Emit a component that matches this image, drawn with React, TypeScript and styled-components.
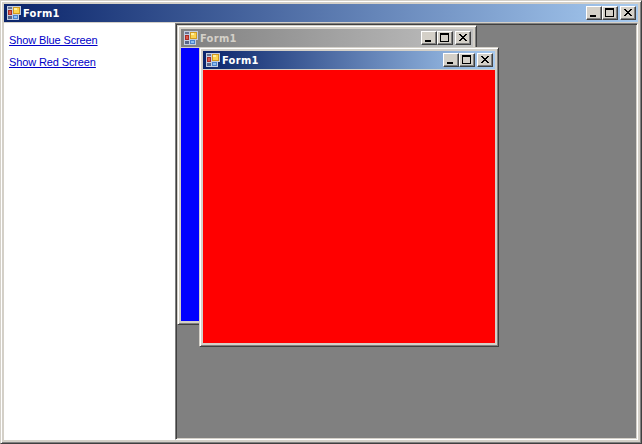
import React from "react";
import styled, { createGlobalStyle } from "styled-components";

const face = "#d4d0c8";

const GlobalStyle = createGlobalStyle`
  *, *::before, *::after { box-sizing: border-box; }
  body { margin: 0; overflow: hidden; background: ${face}; }
`;

const Frame = styled.section`
  display: flex;
  flex-direction: column;
  padding: 3px;
  background: ${face};
  border: 1px solid;
  border-color: ${face} #404040 #404040 ${face};
  box-shadow: inset 1px 1px #fff, inset -1px -1px #808080;
`;

const MainFrame = styled(Frame)`
  width: 642px;
  height: 444px;
`;

const ChildFrame = styled(Frame)<{ $offset: number }>`
  position: absolute;
  left: ${(p) => p.$offset}px;
  top: ${(p) => p.$offset}px;
  width: 300px;
  height: 300px;
`;

const TitleBar = styled.header<{ $active: boolean }>`
  display: flex;
  align-items: center;
  flex: none;
  height: 18px;
  margin-bottom: 1px;
  padding: 0 2px;
  background: ${(p) =>
    p.$active
      ? "linear-gradient(90deg, #0a246a, #a6caf0)"
      : "linear-gradient(90deg, #808080, #c0c0c0)"};
`;

const Title = styled.h1<{ $active: boolean }>`
  flex: 1;
  margin: 0 0 0 1px;
  padding-top: 2px;
  font: bold 11px/16px "DejaVu Sans Condensed", "DejaVu Sans", sans-serif;
  letter-spacing: 0.3px;
  color: ${(p) => (p.$active ? "#fff" : "#d4d0c8")};
`;

const CaptionButton = styled.button<{ $gap?: boolean }>`
  display: block;
  flex: none;
  width: 16px;
  height: 14px;
  margin: 0 0 0 ${(p) => (p.$gap ? 2 : 0)}px;
  padding: 0;
  background: ${face};
  border: 1px solid;
  border-color: #fff #404040 #404040 #fff;
  box-shadow: inset -1px -1px #808080;
`;

const Icon = styled.svg`
  flex: none;
  display: block;
`;

const Workspace = styled.main`
  display: flex;
  flex: 1;
  min-height: 0;
`;

const LinkPanel = styled.nav`
  display: flex;
  flex-direction: column;
  align-items: flex-start;
  gap: 9px;
  width: 171px;
  padding: 11px 0 0 5px;
  background: #fff;
`;

const PanelLink = styled.a`
  font: 11px/13px "Liberation Sans", Arial, sans-serif;
  letter-spacing: -0.12px;
  white-space: nowrap;
  color: #0000c8;
  text-decoration: underline;
  text-decoration-thickness: 1px;
  text-underline-offset: 1px;
`;

const MdiArea = styled.div`
  position: relative;
  flex: 1;
  background: #808080;
  border: 1px solid;
  border-color: #808080 #fff #fff #808080;
  box-shadow: inset 1px 1px #404040, inset -1px -1px ${face};
`;

const Screen = styled.div<{ $color: string }>`
  flex: 1;
  background: ${(p) => p.$color};
`;

const FormIcon = () => (
  <Icon width="16" height="16" viewBox="0 0 16 16" shapeRendering="crispEdges">
    <path fill="#c3cde0" d="M1 1h14v9h-2v5H1z" />
    <path fill="#6b7391" d="M2 2h4v2H2z" />
    <path fill="#59658a" d="M2 11h4v3H2z" />
    <path fill="#a82c28" d="M2 5h4v5H2z" />
    <path fill="#e05a48" d="M3 6h2v3H3z" />
    <path fill="#d09a20" d="M7 2h7v7H7z" />
    <path fill="#fbd450" d="M8 3h5v5H8z" />
    <path fill="#fff0a0" d="M8 3h3v2H8z" />
    <path fill="#4a82cc" d="M7 10h5v4H7z" />
    <path fill="#8cbef1" d="M8 11h3v2H8z" />
  </Icon>
);

const Caption = ({ active = true }: { active?: boolean }) => (
  <TitleBar $active={active}>
    <FormIcon />
    <Title $active={active}>Form1</Title>
    <CaptionButton aria-label="Minimize">
      <Icon width="14" height="12" shapeRendering="crispEdges">
        <path d="M3 8h6v2H3z" />
      </Icon>
    </CaptionButton>
    <CaptionButton aria-label="Maximize">
      <Icon width="14" height="12" shapeRendering="crispEdges">
        <path fillRule="evenodd" d="M2 1h9v9H2zM3 3v6h7V3z" />
      </Icon>
    </CaptionButton>
    <CaptionButton aria-label="Close" $gap>
      <Icon width="14" height="12" shapeRendering="crispEdges">
        <path d="M3 2h2v1h1v1h2V3h1V2h2v1h-1v1H9v1H8v1h1v1h1v1h1v1H9V8H8V7H6v1H5v1H3V8h1V7h1V6h1V5H5V4H4V3H3z" />
      </Icon>
    </CaptionButton>
  </TitleBar>
);

export default function App() {
  return (
    <>
      <GlobalStyle />
      <MainFrame>
        <Caption />
        <Workspace>
          <LinkPanel>
            <PanelLink href="#blue">Show Blue Screen</PanelLink>
            <PanelLink href="#red">Show Red Screen</PanelLink>
          </LinkPanel>
          <MdiArea>
            <ChildFrame $offset={1}>
              <Caption active={false} />
              <Screen $color="#00f" />
            </ChildFrame>
            <ChildFrame $offset={23}>
              <Caption />
              <Screen $color="#f00" />
            </ChildFrame>
          </MdiArea>
        </Workspace>
      </MainFrame>
    </>
  );
}
